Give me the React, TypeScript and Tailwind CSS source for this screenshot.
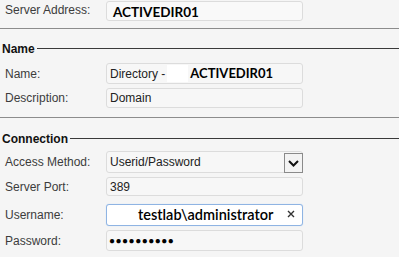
import React from "react";

const labelCls =
  "w-[106px] shrink-0 pl-[5px] text-[12px] text-[#3c3c3c] font-['Liberation_Sans',Arial,sans-serif]";
const boxCls =
  "w-[197px] rounded-[3px] border border-[#dcdcdc] bg-[#f7f7f7] flex items-center";

function Separator({ mt }: { mt: string }) {
  return <div className={`${mt} h-px w-full bg-[#8c8c8c]`} />;
}

export default function App() {
  return (
    <div className="w-[399px] h-[257px] bg-[#f5f5f5] overflow-hidden flex flex-col font-['Liberation_Sans',Arial,sans-serif]">
      {/* Server Address */}
      <div className="flex h-[22px] items-start">
        <div className={`${labelCls} pt-[1px]`}>Server Address:</div>
        <div className={`${boxCls} mt-[1px] h-[20px] bg-[#f9f9f9]`}>
          <span className="pl-[6px] pt-[3px] text-[13.5px] font-bold text-black font-['Lato',sans-serif]">
            ACTIVEDIR01
          </span>
        </div>
      </div>
      <Separator mt="mt-[6px]" />

      {/* Name heading */}
      <div className="mt-[12px] flex h-[15px] items-center pl-[2px]">
        <span className="text-[12px] font-bold text-[#111]">Name</span>
        <div className="ml-[2px] h-px flex-1 bg-[#3a3a3a]" />
      </div>

      <div className="mt-[7px] flex items-center">
        <div className={labelCls}>Name:</div>
        <div className={`${boxCls} h-[21px]`}>
          <span className="pl-[3px] text-[12px] text-[#222]">Directory -</span>
          <span className="ml-[2px] h-[17px] w-[21px] bg-white" />
          <span className="pl-[2px] text-[13px] font-bold text-black font-['Lato',sans-serif]">
            ACTIVEDIR01
          </span>
        </div>
      </div>

      <div className="mt-[4px] flex items-center">
        <div className={labelCls}>Description:</div>
        <div className={`${boxCls} h-[20px]`}>
          <span className="pl-[3px] text-[12px] text-[#222]">Domain</span>
        </div>
      </div>

      <Separator mt="mt-[9px]" />

      {/* Connection heading */}
      <div className="mt-[13px] flex h-[15px] items-center pl-[2px]">
        <span className="text-[12px] font-bold text-[#111]">Connection</span>
        <div className="ml-[2px] h-px flex-1 bg-[#3a3a3a]" />
      </div>

      <div className="mt-[5px] flex items-center">
        <div className={labelCls}>Access Method:</div>
        <div className={`${boxCls} h-[22px] justify-between`}>
          <span className="pl-[3px] text-[12px] text-[#222]">Userid/Password</span>
          <span className="mr-[-1px] mt-[2px] flex h-[20px] w-[19px] items-center justify-center border border-[#8a8a8a] bg-[#f3f3f3]">
            <svg width="11" height="7" viewBox="0 0 11 7">
              <path d="M1 1 L5.5 5.5 L10 1" fill="none" stroke="#111" strokeWidth="2" />
            </svg>
          </span>
        </div>
      </div>

      <div className="mt-[4px] flex items-center">
        <div className={labelCls}>Server Port:</div>
        <div className={`${boxCls} h-[19px]`}>
          <span className="pl-[3px] text-[12px] text-[#222]">389</span>
        </div>
      </div>

      <div className="mt-[8px] flex items-center">
        <div className={labelCls}>Username:</div>
        <div className="flex h-[22px] w-[197px] items-center justify-between rounded-[3px] border border-[#8fb4e3] bg-white shadow-[0_0_1px_#b9d2f2]">
          <span className="pl-[31px] text-[14.5px] font-semibold text-black font-['Lato',sans-serif]">
            testlab\administrator
          </span>
          <svg className="mr-[7px] mb-[2px]" width="8" height="8" viewBox="0 0 8 8">
            <path d="M1 1 L7 7 M7 1 L1 7" stroke="#333" strokeWidth="1.4" />
          </svg>
        </div>
      </div>

      <div className="mt-[4px] flex items-center">
        <div className={labelCls}>Password:</div>
        <div className={`${boxCls} h-[21px]`}>
          <span className="pl-[2px] text-[10px] tracking-[0.5px] text-black">●●●●●●●●●●</span>
        </div>
      </div>
    </div>
  );
}
